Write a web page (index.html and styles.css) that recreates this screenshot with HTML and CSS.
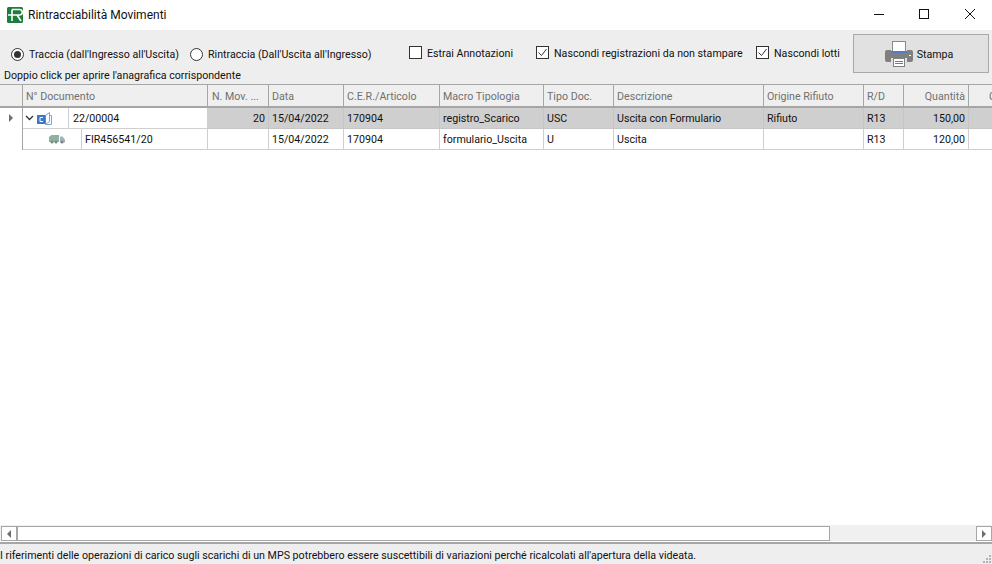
FILE: index.html
```html
<!DOCTYPE html>
<html lang="it">
<head>
<meta charset="utf-8">
<title>Rintracciabilità Movimenti</title>
<link rel="stylesheet" href="styles.css">
</head>
<body>
<div class="window">
  <header class="titlebar">
    <svg class="logo" width="16" height="16" viewBox="0 0 16 16"><rect width="16" height="16" rx="1.500" fill="#1e7d3a"/><path d="M1 8h11.500M5 2.500h7.500a2.700 2.700 0 0 1 0 5.500M5 2.500V14M10 8l4 6" fill="none" stroke="#fff" stroke-width="1.600"/></svg>
    <span class="title">Rintracciabilità Movimenti</span>
    <div class="winbtns">
      <svg width="46" height="30" viewBox="0 0 46 30"><path d="M20 14.500h10" stroke="#111"/></svg>
      <svg width="46" height="30" viewBox="0 0 46 30"><rect x="19.500" y="9.500" width="9" height="9" fill="none" stroke="#111"/></svg>
      <svg width="46" height="30" viewBox="0 0 46 30"><path d="M19 9l10 10M29 9L19 19" stroke="#111" fill="none"/></svg>
    </div>
  </header>
  <section class="toolbar">
    <div class="options">
      <div class="optrow">
        <span class="radio on"></span><span class="lbl l1">Traccia (dall'Ingresso all'Uscita)</span>
        <span class="radio"></span><span class="lbl l2">Rintraccia (Dall'Uscita all'Ingresso)</span>
        <span class="check"></span><span class="lbl l3 up">Estrai Annotazioni</span>
        <span class="check"><svg width="13" height="13" viewBox="0 0 13 13"><path d="M2.500 6.500l3 3 5-6.500" fill="none" stroke="#333"/></svg></span><span class="lbl l4 up">Nascondi registrazioni da non stampare</span>
        <span class="check"><svg width="13" height="13" viewBox="0 0 13 13"><path d="M2.500 6.500l3 3 5-6.500" fill="none" stroke="#333"/></svg></span><span class="lbl l5 up">Nascondi lotti</span>
      </div>
      <div class="hint">Doppio click per aprire l'anagrafica corrispondente</div>
    </div>
    <button class="print" type="button">
      <svg width="28" height="26" viewBox="0 0 28 26"><rect x="7.500" y="0.500" width="13" height="11" fill="#fff" stroke="#8a8a8a"/><rect x="6" y="10" width="16" height="2" fill="#4f81bd"/><path d="M2 9h4v3h16V9h4a2 2 0 0 1 2 2v8a2 2 0 0 1-2 2h-4v-4H6v4H2a2 2 0 0 1-2-2v-8a2 2 0 0 1 2-2z" fill="#808080"/><rect x="24" y="14" width="2" height="1" fill="#fff"/><rect x="8.500" y="17.500" width="11" height="8" fill="#fff" stroke="#808080"/><path d="M10 20.500h8M10 22.500h8" stroke="#4f81bd"/></svg>
      <span class="ptext">Stampa</span>
    </button>
  </section>
  <section class="grid">
    <div class="row head">
      <div class="c ind"></div><div class="c">N° Documento</div><div class="c nmov">N. Mov. ...</div><div class="c">Data</div><div class="c">C.E.R./Articolo</div><div class="c">Macro Tipologia</div><div class="c">Tipo Doc.</div><div class="c">Descrizione</div><div class="c">Origine Rifiuto</div><div class="c">R/D</div><div class="c r">Quantità</div><div class="c last">C</div>
    </div>
    <div class="row sel">
      <div class="c ind"><i class="arrow"></i></div>
      <div class="c tree">
        <span class="tools">
          <svg width="9" height="6" viewBox="0 0 9 6"><path d="M1 1l3.500 3.500L8 1" fill="none" stroke="#333" stroke-width="1.300"/></svg>
          <svg width="15" height="13" viewBox="0 0 15 13"><path d="M8.500 12.500V3.500L12.500.5V9.500L8.500 12.500M12.500 3.500h2V12.500h-6" fill="#fff" stroke="#7ba7d8"/><rect y="3" width="8.500" height="9" fill="#3f78c0"/><path d="M6 5.500H3v4h3" fill="none" stroke="#fff"/></svg>
        </span>
        <span class="val v1">22/00004</span>
      </div>
      <div class="c r g">20</div><div class="c g">15/04/2022</div><div class="c g">170904</div><div class="c g">registro_Scarico</div><div class="c g">USC</div><div class="c g">Uscita con Formulario</div><div class="c g">Rifiuto</div><div class="c g">R13</div><div class="c r g">150,00</div><div class="c g"></div>
    </div>
    <div class="row">
      <div class="c ind blank"></div>
      <div class="c tree">
        <span class="tools t2">
          <svg width="16" height="10" viewBox="0 0 16 10"><path d="M0 8V3L2.500 1h7.500v7z" fill="#8fb0a2"/><path d="M11 2.500h2.500l2.500 3v3h-5z" fill="#9db4bd"/><circle cx="3" cy="8" r="1.500" fill="#7a8a83"/><circle cx="7" cy="8" r="1.500" fill="#7a8a83"/><circle cx="13" cy="8" r="1.500" fill="#7a8a83"/></svg>
        </span>
        <span class="val v2">FIR456541/20</span>
      </div>
      <div class="c"></div><div class="c">15/04/2022</div><div class="c">170904</div><div class="c">formulario_Uscita</div><div class="c">U</div><div class="c">Uscita</div><div class="c"></div><div class="c">R13</div><div class="c r">120,00</div><div class="c"></div>
    </div>
  </section>
  <section class="hscroll">
    <span class="sbtn"><i class="tri left"></i></span>
    <span class="thumb"></span>
    <span class="sbtn end"><i class="tri right"></i></span>
  </section>
  <footer class="status">I riferimenti delle operazioni di carico sugli scarichi di un MPS potrebbero essere suscettibili di variazioni perché ricalcolati all'apertura della videata.
    <svg class="grip" width="9" height="9" viewBox="0 0 9 9"><path d="M6 0h2v2H6zM3 3h2v2H3zM6 3h2v2H6zM0 6h2v2H0zM3 6h2v2H3zM6 6h2v2H6z" fill="#b4b4b4"/></svg>
  </footer>
</div>
</body>
</html>
```
FILE: styles.css
```css
* { box-sizing: border-box; }
html, body { margin: 0; padding: 0; background: #fff; }
body { width: 992px; height: 564px; overflow: hidden; font: 10.67px/14px Roboto, "Noto Sans", sans-serif; color: #111; }
.window { display: flex; flex-direction: column; height: 564px; }

.titlebar { height: 30px; flex: none; display: flex; align-items: center; padding-left: 7px; background: #fff; }
.logo { margin-right: 5px; }
.title { font-size: 12px; }
.winbtns { margin-left: auto; display: flex; height: 30px; }

.toolbar { height: 54px; flex: none; background: #eeeeee; display: flex; justify-content: space-between; padding: 4px 3px 0 4px; }
.options { display: flex; flex-direction: column; min-width: 0; width: 840px; }
.optrow { display: flex; align-items: center; height: 30px; margin-top: 5px; padding-left: 7px; }
.radio { width: 13px; height: 13px; border: 1px solid #333; border-radius: 50%; background: #fff; margin-right: 5px; display: flex; align-items: center; justify-content: center; flex: none; }
.radio.on::after { content: ""; width: 7px; height: 7px; border-radius: 50%; background: #333; }
.check { width: 13px; height: 13px; border: 1px solid #333; background: #fff; margin-right: 5px; flex: none; margin-top: -3px; display: flex; }
.check svg { margin: -1px; flex: none; }
.lbl { white-space: nowrap; flex: none; }
.l1, .l2 { margin-top: 1px; }
.lbl.up { margin-top: -1px; }
.l1 { width: 161px; }
.l2 { width: 201px; }
.l3 { width: 109px; }
.l4 { width: 202px; }
.hint { white-space: nowrap; }

.print { width: 136px; height: 39px; border: 1px solid #a9a9a9; background: #e1e1e1; font: inherit; color: #111; display: flex; align-items: center; justify-content: center; gap: 4px; padding: 0 4px 0 0; }
.print svg { flex: none; }
.ptext { margin-top: 2px; }

.grid { flex: 1; min-height: 0; overflow: hidden; background: #fff; }
.row { display: grid; grid-template-columns: 23px 185px 61px 75px 96px 104px 70px 150px 100px 40px 65px 40px; height: 21px; width: 1009px; }
.c { border-right: 1px solid #cfcfcf; border-bottom: 1px solid #cfcfcf; padding: 0 3px; line-height: 21px; white-space: nowrap; overflow: hidden; }
.r { text-align: right; }
.head { height: 24px; background: #efefef; color: #6f6f6f; border-top: 1px solid #a6a6a6; }
.head .c { border-right: 1px solid #a6a6a6; border-bottom: 2px solid #a6a6a6; line-height: 23px; }
.head .last { padding-left: 20px; }
.head .nmov { padding-left: 4px; }
.g { background: #cfcfcf; border-right-color: #c6c6c6; border-bottom-color: #c6c6c6; }
.ind { padding: 0; position: relative; border-right-color: #a6a6a6; border-bottom: 0; }
.head .ind { border-bottom: 2px solid #a6a6a6; }
.arrow { position: absolute; left: 9px; top: 6px; border-left: 4px solid #6e6e6e; border-top: 4px solid transparent; border-bottom: 4px solid transparent; }
.tree { display: flex; padding: 0; }
.tools { display: flex; align-items: center; gap: 3px; padding-left: 2px; flex: none; width: 45px; }
.tools.t2 { width: 58px; padding-left: 26px; }
.val { flex: 1; border-left: 1px solid #cfcfcf; padding-left: 3px; line-height: 21px; }
.v1 { padding-left: 4px; }

.hscroll { height: 16px; flex: none; background: #f0f0f0; display: flex; align-items: flex-end; }
.sbtn { width: 16px; height: 15px; border: 1px solid #a6a6a6; background: #fff; display: flex; align-items: center; justify-content: center; margin-left: 1px; flex: none; }
.sbtn.end { margin-left: 146px; }
.thumb { width: 813px; height: 15px; border: 1px solid #a6a6a6; background: #fff; flex: none; }
.tri { border-top: 4px solid transparent; border-bottom: 4px solid transparent; }
.tri.left { border-right: 4px solid #6e6e6e; }
.tri.right { border-left: 4px solid #6e6e6e; }

.status { height: 22px; flex: none; background: #eeeeee; border-top: 2px solid #a6a6a6; padding-top: 5px; line-height: 14px; white-space: nowrap; margin-top: 1px; position: relative; }
.grip { position: absolute; right: 0; bottom: 0; }
```
